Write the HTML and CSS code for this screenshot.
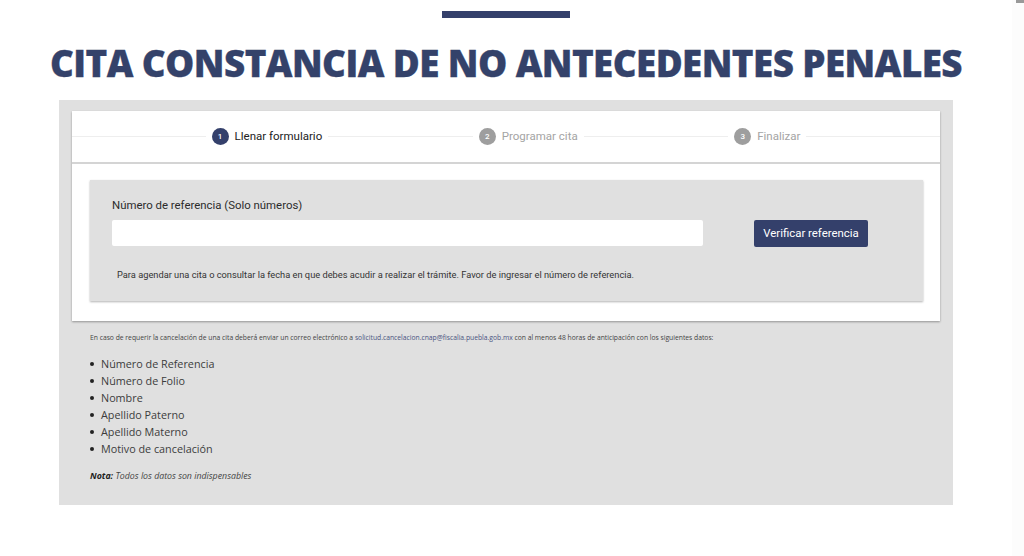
FILE: index.html
```html
<!DOCTYPE html>
<html lang="es">
<head>
<meta charset="utf-8">
<title>Cita constancia de no antecedentes penales</title>
<link rel="stylesheet" href="styles.css">
</head>
<body>
<main class="page">
  <div class="rule"></div>
  <h1 class="title">CITA CONSTANCIA DE NO ANTECEDENTES PENALES</h1>
  <section class="panel">
    <div class="card">
      <div class="stepper">
        <span class="line outer"></span>
        <div class="step active"><span class="num">1</span><span class="label">Llenar formulario</span></div>
        <span class="line"></span>
        <div class="step"><span class="num">2</span><span class="label">Programar cita</span></div>
        <span class="line"></span>
        <div class="step"><span class="num">3</span><span class="label">Finalizar</span></div>
        <span class="line outer"></span>
      </div>
      <div class="card-body">
        <div class="form-box">
          <div class="form-row">
            <div class="field">
              <label class="field-label" for="ref">Número de referencia (Solo números)</label>
              <input class="field-input" id="ref" type="text">
            </div>
            <button class="btn" type="button">Verificar referencia</button>
          </div>
          <p class="hint">Para agendar una cita o consultar la fecha en que debes acudir a realizar el trámite. Favor de ingresar el número de referencia.</p>
        </div>
      </div>
    </div>
    <div class="notes">
      <p class="small">En caso de requerir la cancelación de una cita deberá enviar un correo electrónico a <a class="mail" href="#">solicitud.cancelacion.cnap@fiscalia.puebla.gob.mx</a> con al menos 48 horas de anticipación con los siguientes datos:</p>
      <ul class="list">
        <li>Número de Referencia</li>
        <li>Número de Folio</li>
        <li>Nombre</li>
        <li>Apellido Paterno</li>
        <li>Apellido Materno</li>
        <li>Motivo de cancelación</li>
      </ul>
      <p class="note"><strong>Nota:</strong> <em>Todos los datos son indispensables</em></p>
    </div>
  </section>
</main>
<aside class="scrollbar"><span class="thumb"></span></aside>
</body>
</html>
```
FILE: styles.css
```css
* { box-sizing: border-box; }
html, body { margin: 0; height: 556px; overflow: hidden; background: #fff; }
body { display: flex; }
.page { width: 1012px; flex: none; display: flex; flex-direction: column; align-items: center; padding-top: 11px; }
.scrollbar { flex: 1; background: #fcfcfc; display: flex; flex-direction: column; align-items: flex-end; }
.thumb { width: 8px; height: 3px; background: #999; }
.rule { width: 128px; height: 7px; background: #34406b; }
.title { margin: 23px 0 0; height: 43px; width: 100%; text-align: center; font: 800 36.8px/44px "Open Sans", sans-serif; letter-spacing: -0.57px; color: #34426a; white-space: nowrap; -webkit-text-stroke: 0.3px #34426a; }
.panel { width: 894px; height: 405px; margin-top: 16px; background: #e0e0e0; padding: 11px 13px 0; }
.card { background: #fff; height: 210px; box-shadow: 0 1px 2px rgba(0,0,0,.35); }
.stepper { height: 53px; display: flex; align-items: center; border-bottom: 2px solid #d4d4d4; padding-bottom: 1px; }
.line { flex: 145 1 0; height: 1px; background: #eee; }
.line.outer { flex-grow: 134; }
.step { display: flex; align-items: center; gap: 6px; padding: 0 6px; font: 400 11.5px Roboto, sans-serif; color: #a4a4a4; }
.num { width: 17px; height: 17px; border-radius: 50%; background: #9e9e9e; color: #fff; font-size: 8px; font-weight: 500; display: flex; align-items: center; justify-content: center; }
.active { color: #222; }
.active .num { background: #34406b; }
.card-body { padding: 16px 17px 0 18px; }
.form-box { background: #e0e0e0; height: 121px; box-shadow: 0 1px 2px rgba(0,0,0,.3); padding: 17px 22px 0; }
.form-row { display: flex; align-items: flex-end; }
.field { width: 591px; }
.field-label { display: block; font: 400 11.4px/16px Roboto, sans-serif; color: #2c2c2c; margin-bottom: 7px; }
.field-input { display: block; width: 100%; height: 26px; border: 0; border-radius: 2px; background: #fff; padding: 0 8px; }
.btn { width: 114px; height: 27px; margin-left: 51px; border: 0; border-radius: 2px; background: #34406b; color: #fff; font: 400 11.4px Roboto, sans-serif; padding: 0 0 2px; margin-bottom: -1px; }
.hint { margin: 23px 0 0 5px; font: 400 9.27px/12px Roboto, sans-serif; color: #333; white-space: nowrap; }
.notes { padding: 11px 18px 0; }
.small { margin: 0; font: 400 6.75px/12px "Open Sans", sans-serif; color: #444; white-space: nowrap; }
.mail { color: #4a5480; text-decoration: none; }
.list { margin: 11px 0 0; padding: 0; list-style: none; font: 400 10.8px/17px "Open Sans", sans-serif; color: #3c3c3c; }
.list li { display: flex; align-items: center; gap: 7px; }
.list li::before { content: ""; width: 4px; height: 4px; border-radius: 50%; background: #222; flex: none; }
.note { margin: 13px 0 0; font: 400 8.8px/12px "Open Sans", sans-serif; color: #444; }
.note strong { color: #222; font-weight: 700; font-style: italic; }
```
